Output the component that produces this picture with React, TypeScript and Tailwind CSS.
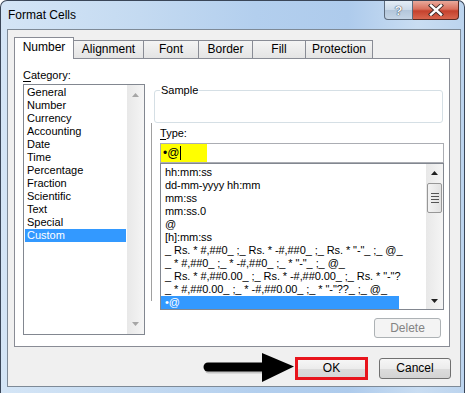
import React from 'react';

const categories = ['General', 'Number', 'Currency', 'Accounting', 'Date', 'Time', 'Percentage', 'Fraction', 'Scientific', 'Text', 'Special', 'Custom'];

const typeItems = [
  'hh:mm:ss',
  'dd-mm-yyyy hh:mm',
  'mm:ss',
  'mm:ss.0',
  '@',
  '[h]:mm:ss',
  '_ Rs. * #,##0_ ;_ Rs. * -#,##0_ ;_ Rs. * "-"_ ;_ @_',
  '_ * #,##0_ ;_ * -#,##0_ ;_ * "-"_ ;_ @_',
  '_ Rs. * #,##0.00_ ;_ Rs. * -#,##0.00_ ;_ Rs. * "-"?',
  '_ * #,##0.00_ ;_ * -#,##0.00_ ;_ * "-"??_ ;_ @_',
  '•@',
];

function Tri({ up, color }: { up: boolean; color: string }) {
  return (
    <svg width="7" height="4" viewBox="0 0 7 4">
      <path d={up ? 'M0 4 L3.5 0 L7 4Z' : 'M0 0 L3.5 4 L7 0Z'} fill={color} />
    </svg>
  );
}

export default function App() {
  return (
    <div className="w-[467px] h-[393px] bg-white overflow-hidden [font-family:'Liberation_Sans',Arial,sans-serif] text-black">
      <div className="w-[465px] h-[393px] flex flex-col border-l border-t border-r border-[#3a4658] rounded-t-[7px] bg-[linear-gradient(90deg,#d4e5f6_0%,#c4daf1_30%,#b3cfee_55%,#aecbec_75%,#c9ddf2_90%,#bcd4ee_100%)]">
        {/* Title bar */}
        <div className="h-[28px] flex items-start shrink-0">
          <div className="pl-[7px] pt-[7px] text-[12px] leading-[15px]">Format Cells</div>
          <div className="ml-auto mr-[5px] flex">
            <div className="w-[29px] h-[19px] border border-t-0 border-[#5d6b7c] rounded-bl-[4px] bg-[linear-gradient(180deg,#e4edf6_0%,#cbd9e8_50%,#b3c6da_51%,#c5d5e6_100%)] flex items-center justify-center">
              <span className="text-[13px] font-bold leading-[13px] text-[#f4f7fb] [text-shadow:0_0_1px_#2c3a4a,0_0_1px_#2c3a4a]">?</span>
            </div>
            <div className="w-[46px] h-[19px] border border-t-0 border-l-0 border-[#5a2a22] rounded-br-[4px] bg-[linear-gradient(180deg,#e9a99b_0%,#d9705d_45%,#c5412d_55%,#d8664e_100%)] flex items-center justify-center">
              <svg width="16" height="12" viewBox="0 0 16 12">
                <path d="M3 1.5 L13 10.5 M13 1.5 L3 10.5" stroke="#3b2a28" strokeWidth="4.2" strokeLinecap="square" />
                <path d="M3 1.5 L13 10.5 M13 1.5 L3 10.5" stroke="#ffffff" strokeWidth="2.4" strokeLinecap="square" />
              </svg>
            </div>
          </div>
        </div>

        {/* Client area */}
        <div className="ml-[6px] mr-[3px] h-[358px] border border-[#7e8a97] bg-[#f0f0f0] flex flex-col pt-[7px] text-[11px] leading-[13px]">
          {/* Tabs */}
          <div className="flex items-end pl-[6px] text-[12px]">
            <div className="relative z-10 w-[60px] h-[22px] -mb-px border border-b-0 border-[#898c95] bg-white flex items-center justify-center pb-[2px]">Number</div>
            <div className="w-[69px] h-[18px] border-t border-[#898c95] bg-[linear-gradient(180deg,#f4f4f4,#e4e4e4)] flex items-center justify-center">Alignment</div>
            <div className="w-[55px] h-[18px] border-t border-l border-[#898c95] bg-[linear-gradient(180deg,#f4f4f4,#e4e4e4)] flex items-center justify-center">Font</div>
            <div className="w-[54px] h-[18px] border-t border-l border-[#898c95] bg-[linear-gradient(180deg,#f4f4f4,#e4e4e4)] flex items-center justify-center">Border</div>
            <div className="w-[53px] h-[18px] border-t border-l border-[#898c95] bg-[linear-gradient(180deg,#f4f4f4,#e4e4e4)] flex items-center justify-center">Fill</div>
            <div className="w-[68px] h-[18px] border-t border-l border-r border-[#898c95] bg-[linear-gradient(180deg,#f4f4f4,#e4e4e4)] flex items-center justify-center">Protection</div>
          </div>

          {/* Panel */}
          <div className="ml-[6px] w-[436px] h-[289px] border border-[#898c95] bg-white flex">
            {/* Category column */}
            <div className="ml-[8px] pt-[10px] flex flex-col">
              <div><span className="underline underline-offset-2">C</span>ategory:</div>
              <div className="mt-[2px] w-[122px] h-[251px] border border-[#828790] flex">
                <div className="flex-1 pt-[1px] pl-[1px]">
                  {categories.map((c) => (
                    <div
                      key={c}
                      className={
                        c === 'Custom'
                          ? 'h-[13px] w-[101px] pl-[2px] bg-[#3399ff] text-white whitespace-nowrap'
                          : 'h-[13px] w-[101px] pl-[2px] whitespace-nowrap'
                      }
                    >
                      {c}
                    </div>
                  ))}
                </div>
                <div className="w-[17px] bg-[linear-gradient(90deg,#e8e8e8,#f5f5f5)] flex flex-col items-center justify-between py-[8px]">
                  <Tri up color="#a6a6a6" />
                  <Tri up={false} color="#a6a6a6" />
                </div>
              </div>
            </div>

            {/* Right column */}
            <div className="ml-[6px] flex flex-col">
              {/* Sample group */}
              <div className="relative mt-[31px] ml-[3px] w-[289px] h-[33px] border border-[#d5dfe5] rounded-[3px]">
                <span className="absolute left-[5px] top-[-7px] bg-white px-[1px]">Sample</span>
              </div>
              <div className="flex items-start">
                <div className="w-px h-[178px] bg-[#a0a0a0]" />
                <div className="pl-[8px] pt-[4px] w-[292px] flex flex-col">
                  <div><span className="underline underline-offset-2">T</span>ype:</div>
                  <div className="mt-[3px] w-[284px] h-[20px] border border-[#abadb3] flex items-stretch">
                    <div className="w-[46px] bg-[#ffff00] flex items-center pl-[2px] text-[12px]">
                      <span>•@</span>
                      <span className="ml-[1px] w-px h-[14px] bg-black" />
                    </div>
                  </div>
                  <div className="w-[284px] h-[147px] border border-[#828790] flex overflow-hidden">
                    <div className="flex-1 pt-[2px] overflow-hidden">
                      {typeItems.map((t, i) => (
                        <div
                          key={i}
                          className={
                            i === typeItems.length - 1
                              ? 'h-[13px] w-[238px] pl-[4px] bg-[#3399ff] text-white whitespace-nowrap'
                              : 'h-[13px] w-[246px] pl-[4px] whitespace-nowrap tracking-[-0.08px]'
                          }
                        >
                          {t}
                        </div>
                      ))}
                    </div>
                    <div className="w-[17px] bg-[linear-gradient(90deg,#e8e8e8,#f5f5f5)] flex flex-col items-center pt-[7px] pb-[6px]">
                      <Tri up color="#202020" />
                      <div className="mt-[8px] w-[15px] h-[30px] border border-[#979797] rounded-[2px] bg-[linear-gradient(90deg,#f3f3f3,#e2e2e2)] flex flex-col items-center justify-center gap-[2px]">
                        <div className="w-[8px] h-px bg-[#555]" />
                        <div className="w-[8px] h-px bg-[#555]" />
                        <div className="w-[8px] h-px bg-[#555]" />
                        <div className="w-[8px] h-px bg-[#555]" />
                      </div>
                      <div className="mt-auto">
                        <Tri up={false} color="#202020" />
                      </div>
                    </div>
                  </div>
                  <div className="mt-[8px] self-end mr-[3px] w-[67px] h-[20px] border border-[#adb2b5] rounded-[3px] bg-[#f4f4f4] text-[#838383] text-[12px] flex items-center justify-center">
                    Delete
                  </div>
                </div>
              </div>
            </div>
          </div>

          {/* Buttons row */}
          <div className="mt-[4px] flex items-center justify-end pr-[9px] text-[12px]">
            <svg width="94" height="34" viewBox="0 0 94 34">
              <line x1="8" y1="18" x2="66" y2="18" stroke="#9a9a9a" strokeWidth="9" strokeLinecap="round" opacity="0.5" />
              <line x1="7" y1="16" x2="64" y2="16" stroke="#000" strokeWidth="9" strokeLinecap="round" />
              <path d="M61 2 L93 15.5 L61 31 Z" fill="#000" />
            </svg>
            <div className="w-[73px] h-[23px] border-[3px] border-[#e8141c] bg-[linear-gradient(180deg,#f6f6f6_0%,#ececec_50%,#dcdcdc_51%,#d6d6d6_100%)] flex items-center justify-center">
              OK
            </div>
            <div className="ml-[11px] w-[72px] h-[21px] border border-[#707070] rounded-[3px] bg-[linear-gradient(180deg,#f6f6f6_0%,#ececec_50%,#dddddd_51%,#d3d3d3_100%)] flex items-center justify-center">
              Cancel
            </div>
          </div>
        </div>
      </div>
    </div>
  );
}
